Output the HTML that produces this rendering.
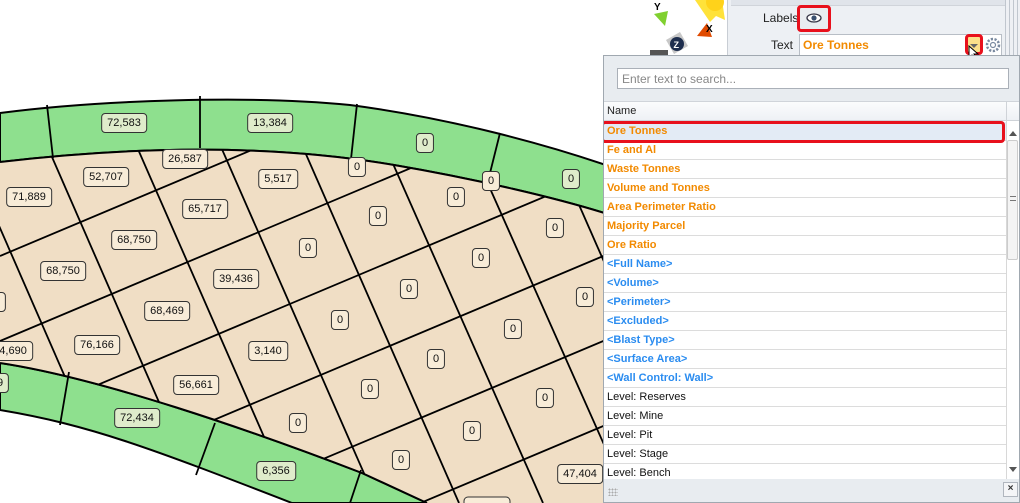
<!DOCTYPE html>
<html><head><meta charset="utf-8"><style>
*{margin:0;padding:0;box-sizing:border-box}
html{width:1020px;height:503px;overflow:hidden}
body{width:1020px;height:503px;overflow:hidden;background:#fff;position:relative;font-family:"Liberation Sans",sans-serif}
#map{position:absolute;left:0;top:0;width:603px;height:503px;overflow:hidden}
.lb{position:absolute;height:20px;line-height:18px;border:1px solid #333;border-radius:4px;background:#f8ecd8;font-size:11px;color:#111;padding:0 5px;transform:translate(-50%,-50%);white-space:nowrap}
.g{background:#dfeccb}
#panel{position:absolute;left:603px;top:55px;width:417px;height:448px;background:#e8ecf0;border:1px solid #a0a8b0;overflow:hidden}
.row{position:absolute;left:0;width:402px;height:19px;border-bottom:1px solid #dcdcdc;background:#fff;font-size:11px;line-height:18px;padding-left:3px}
.o{color:#f28a00;font-weight:bold}.b{color:#2a8cf0;font-weight:bold}.k{color:#111}
</style></head><body>
<div id="map">
<svg width="603" height="503" style="position:absolute;left:0;top:0">
<defs><clipPath id="bc"><path d="M0,162 C120,148 260,142 394,165 C470,178 560,198 620,218 L620,503 L427,503 L362,473 C250,430 100,378 0,363Z"/></clipPath></defs>
<path d="M0,113 C100,100 250,95 350,105 C450,118 550,145 620,170 L620,218 C560,198 470,178 394,165 C260,142 120,148 0,162Z" fill="#8ee08e" stroke="#000" stroke-width="2"/>
<path d="M0,363 C100,378 250,430 362,473 L427,503 L292,503 C150,448 90,425 0,410Z" fill="#8ee08e" stroke="#000" stroke-width="2"/>
<path d="M0,162 C120,148 260,142 394,165 C470,178 560,198 620,218 L620,503 L427,503 L362,473 C250,430 100,378 0,363Z" fill="#f0dec5"/>
<g clip-path="url(#bc)" stroke="#000" stroke-width="1.8">
<line x1="-31" y1="157" x2="120" y2="503"/>
<line x1="52" y1="157" x2="203" y2="503"/>
<line x1="137" y1="147" x2="293" y2="503"/>
<line x1="221" y1="147" x2="377" y2="503"/>
<line x1="305" y1="152" x2="459" y2="503"/>
<line x1="390" y1="157" x2="543" y2="503"/>
<line x1="476" y1="157" x2="630" y2="503"/>
<line x1="558" y1="157" x2="710" y2="503"/>
<line x1="0" y1="256" x2="620" y2="-5"/>
<line x1="0" y1="341" x2="620" y2="80"/>
<line x1="0" y1="426" x2="620" y2="165"/>
<line x1="0" y1="510" x2="620" y2="249"/>
<line x1="0" y1="595" x2="620" y2="334"/>
<line x1="0" y1="680" x2="620" y2="419"/>
</g>
<path d="M0,363 C100,378 250,430 362,473 L427,503" fill="none" stroke="#000" stroke-width="2"/>
<path d="M0,162 C120,148 260,142 394,165 C470,178 560,198 620,218" fill="none" stroke="#000" stroke-width="2"/>
<g stroke="#000" stroke-width="1.8">
<line x1="47" y1="105" x2="53" y2="158"/>
<line x1="200" y1="96" x2="200" y2="148"/>
<line x1="357" y1="104" x2="351" y2="159"/>
<line x1="500" y1="133" x2="487" y2="185"/>
<line x1="69" y1="372" x2="60" y2="425"/>
<line x1="215" y1="423" x2="196" y2="475"/>
<line x1="361" y1="470" x2="350" y2="503"/>
</g>
<rect x="464" y="497" width="46" height="12" rx="4" fill="#f8ecd8" stroke="#333"/>
</svg>
<div class="lb g" style="left:124px;top:123px">72,583</div>
<div class="lb g" style="left:270px;top:123px">13,384</div>
<div class="lb g" style="left:425px;top:143px">0</div>
<div class="lb g" style="left:571px;top:179px">0</div>
<div class="lb" style="left:185px;top:159px">26,587</div>
<div class="lb" style="left:357px;top:167px">0</div>
<div class="lb" style="left:491px;top:181px">0</div>
<div class="lb" style="left:29px;top:197px">71,889</div>
<div class="lb" style="left:106px;top:177px">52,707</div>
<div class="lb" style="left:278px;top:179px">5,517</div>
<div class="lb" style="left:205px;top:209px">65,717</div>
<div class="lb" style="left:378px;top:216px">0</div>
<div class="lb" style="left:456px;top:197px">0</div>
<div class="lb" style="left:555px;top:228px">0</div>
<div class="lb" style="left:134px;top:240px">68,750</div>
<div class="lb" style="left:481px;top:258px">0</div>
<div class="lb" style="left:63px;top:271px">68,750</div>
<div class="lb" style="left:236px;top:279px">39,436</div>
<div class="lb" style="left:308px;top:248px">0</div>
<div class="lb" style="left:409px;top:289px">0</div>
<div class="lb" style="left:585px;top:297px">0</div>
<div class="lb" style="left:-6px;top:302px">98</div>
<div class="lb" style="left:167px;top:311px">68,469</div>
<div class="lb" style="left:340px;top:320px">0</div>
<div class="lb" style="left:513px;top:329px">0</div>
<div class="lb" style="left:10px;top:351px">24,690</div>
<div class="lb" style="left:97px;top:345px">76,166</div>
<div class="lb" style="left:268px;top:351px">3,140</div>
<div class="lb" style="left:436px;top:359px">0</div>
<div class="lb g" style="left:-3px;top:383px">79</div>
<div class="lb" style="left:196px;top:385px">56,661</div>
<div class="lb" style="left:370px;top:389px">0</div>
<div class="lb" style="left:545px;top:398px">0</div>
<div class="lb g" style="left:137px;top:418px">72,434</div>
<div class="lb" style="left:298px;top:423px">0</div>
<div class="lb" style="left:472px;top:431px">0</div>
<div class="lb" style="left:401px;top:460px">0</div>
<div class="lb g" style="left:276px;top:471px">6,356</div>
<div class="lb" style="left:580px;top:474px">47,404</div>
</div>

<svg width="100" height="55" style="position:absolute;left:630px;top:0">
<polygon points="65,0 92,0 95,20 86,16 80,22" fill="#ffe23a"/>
<circle cx="85" cy="2" r="9" fill="#ffd21a"/>
<text x="24" y="10" font-family="Liberation Sans" font-weight="bold" font-size="10">Y</text>
<polygon points="24,14 38,11 35,26" fill="#80d030"/>
<polygon points="67,36 82,37 77,23" fill="#e04a00"/>
<text x="76" y="32" font-family="Liberation Sans" font-weight="bold" font-size="10">X</text>
<polygon points="36,40 50,32 58,46 44,54" fill="#c8c8c8"/>
<circle cx="47" cy="44" r="7" fill="#1e2e4e"/>
<text x="43.5" y="48" font-family="Liberation Sans" font-weight="bold" font-size="9" fill="#fff">Z</text>
<rect x="20" y="50" width="18" height="5" fill="#555"/>
</svg>
<div style="position:absolute;left:727px;top:0;width:293px;height:55px;background:#edf0f4;border-left:1px solid #c8cdd4"></div>
<div style="position:absolute;left:731px;top:0;width:274px;height:6px;background:#e0e4ea;border-bottom:1px solid #d0d4da"></div>
<div style="position:absolute;left:1005px;top:0;width:15px;height:55px;background:repeating-linear-gradient(90deg,#c0c6ce 0 1px,#eef0f4 1px 4px)"></div>
<div style="position:absolute;left:763px;top:11px;font-size:12px;color:#222">Labels</div>
<div style="position:absolute;left:797px;top:5px;width:34px;height:27px;border:3px solid #e8101c;border-radius:4px;background:#e8ecf0"></div>
<svg width="16" height="10" style="position:absolute;left:806px;top:13px"><ellipse cx="8" cy="5" rx="7" ry="4" fill="#fff" stroke="#334" stroke-width="1.3"/><circle cx="8" cy="5" r="2.6" fill="#3a5070"/></svg>
<div style="position:absolute;left:771px;top:38px;font-size:12px;color:#222">Text</div>
<div style="position:absolute;left:799px;top:34px;width:203px;height:21px;background:#fff;border:1px solid #b8bec6;border-bottom:none"></div>
<div style="position:absolute;left:803px;top:38px;font-size:12px;font-weight:bold;color:#f28a00">Ore Tonnes</div>
<div style="position:absolute;left:965px;top:34px;width:18px;height:21px;border:3px solid #e8101c;border-radius:4px;background:#fce08a"></div>
<div style="position:absolute;left:970px;top:44px;border-left:4px solid transparent;border-right:4px solid transparent;border-top:4px solid #666"></div>
<svg width="14" height="16" style="position:absolute;left:968px;top:45px"><path d="M1,1 L1,13 L4,10 L7,15 L9,14 L6,9 L10,9Z" fill="#fff" stroke="#000" stroke-width="1"/></svg>
<svg width="16" height="16" style="position:absolute;left:985px;top:37px"><circle cx="8" cy="8" r="6" fill="none" stroke="#7a8aa0" stroke-width="2.5" stroke-dasharray="2.2 1.5"/><circle cx="8" cy="8" r="2.5" fill="none" stroke="#7a8aa0" stroke-width="1.2"/></svg>

<div id="panel">
<div style="position:absolute;left:13px;top:12px;width:392px;height:21px;background:#fff;border:1px solid #aab0b8;font-size:12px;color:#888;padding:3px 4px">Enter text to search...</div>
<div style="position:absolute;left:0;top:45px;width:415px;height:20px;background:linear-gradient(#fbfcfd,#eef1f5);border-top:1px solid #d0d4da;border-bottom:1px solid #cfd3d8;font-size:11px;line-height:19px;padding-left:3px;color:#222">Name</div>
<div style="position:absolute;left:402px;top:45px;width:1px;height:20px;background:#cfd3d8"></div>
<div style="position:absolute;left:0;top:65px;width:402px;height:358px;background:#fff;overflow:hidden">
<div class="row o" style="top:1px;background:#e3ebf5">Ore Tonnes</div>
<div class="row o" style="top:20px">Fe and Al</div>
<div class="row o" style="top:39px">Waste Tonnes</div>
<div class="row o" style="top:58px">Volume and Tonnes</div>
<div class="row o" style="top:77px">Area Perimeter Ratio</div>
<div class="row o" style="top:96px">Majority Parcel</div>
<div class="row o" style="top:115px">Ore Ratio</div>
<div class="row b" style="top:134px">&lt;Full Name&gt;</div>
<div class="row b" style="top:153px">&lt;Volume&gt;</div>
<div class="row b" style="top:172px">&lt;Perimeter&gt;</div>
<div class="row b" style="top:191px">&lt;Excluded&gt;</div>
<div class="row b" style="top:210px">&lt;Blast Type&gt;</div>
<div class="row b" style="top:229px">&lt;Surface Area&gt;</div>
<div class="row b" style="top:248px">&lt;Wall Control: Wall&gt;</div>
<div class="row k" style="top:267px">Level: Reserves</div>
<div class="row k" style="top:286px">Level: Mine</div>
<div class="row k" style="top:305px">Level: Pit</div>
<div class="row k" style="top:324px">Level: Stage</div>
<div class="row k" style="top:343px">Level: Bench</div>
</div>
<div style="position:absolute;left:-3px;top:65px;width:404px;height:22px;border:3px solid #e8101c;border-radius:4px"></div>
<div style="position:absolute;left:402px;top:65px;width:13px;height:358px;background:#fff;border-left:1px solid #d8d8d8"></div>
<div style="position:absolute;left:405px;top:75px;border-left:4px solid transparent;border-right:4px solid transparent;border-bottom:5px solid #555"></div>
<div style="position:absolute;left:403px;top:84px;width:11px;height:120px;background:#f4f4f4;border:1px solid #ccc;border-radius:2px"></div>
<div style="position:absolute;left:406px;top:140px;width:6px;height:5px;border-top:1px solid #777;border-bottom:1px solid #777"></div>
<div style="position:absolute;left:405px;top:411px;border-left:4px solid transparent;border-right:4px solid transparent;border-top:5px solid #555"></div>
<div style="position:absolute;left:4px;top:432px;width:10px;height:8px;background:radial-gradient(circle,#aaa 0.8px,transparent 1px) 0 0/3px 3px"></div>
<div style="position:absolute;left:399px;top:426px;width:15px;height:15px;border:1px solid #b0b6be;background:#f4f5f7;font-size:10px;line-height:12px;text-align:center;color:#333;font-weight:bold">×</div>
</div>
</body></html>
